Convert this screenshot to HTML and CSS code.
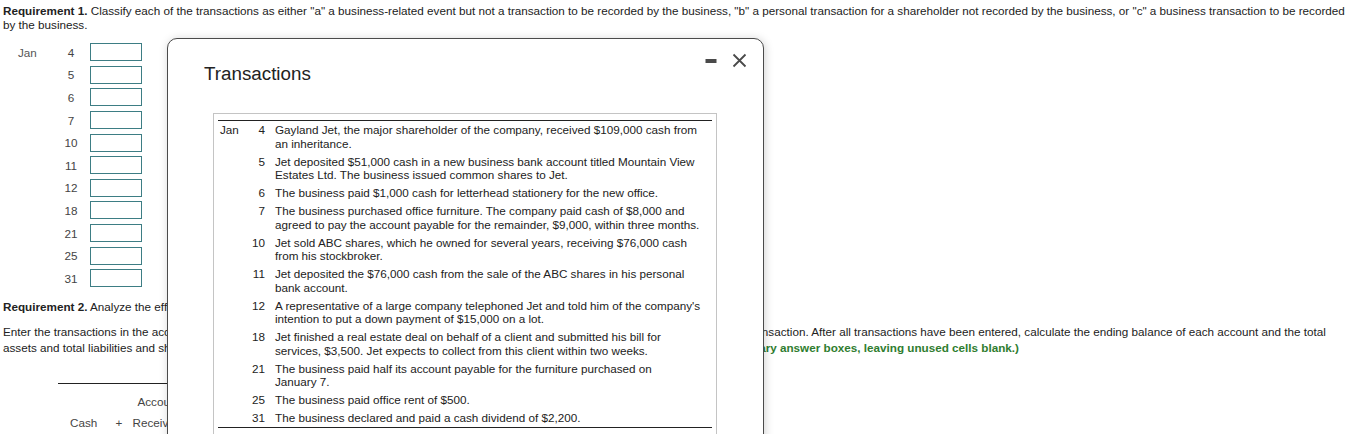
FILE: index.html
```html
<!DOCTYPE html>
<html lang="en">
<head>
<meta charset="utf-8">
<title>Transactions</title>
<link rel="stylesheet" href="styles.css">
</head>
<body>
<div class="page">
  <p class="req req1"><b>Requirement 1.</b> Classify each of the transactions as either "a" a business-related event but not a transaction to be recorded by the business, "b" a personal transaction for a shareholder not recorded by the business, or "c" a business transaction to be recorded by the business.</p>

  <div class="classify">
    <div class="month">Jan</div><div class="day">4</div><div class="answer"></div>
    <div class="month"></div><div class="day">5</div><div class="answer"></div>
    <div class="month"></div><div class="day">6</div><div class="answer"></div>
    <div class="month"></div><div class="day">7</div><div class="answer"></div>
    <div class="month"></div><div class="day">10</div><div class="answer"></div>
    <div class="month"></div><div class="day">11</div><div class="answer"></div>
    <div class="month"></div><div class="day">12</div><div class="answer"></div>
    <div class="month"></div><div class="day">18</div><div class="answer"></div>
    <div class="month"></div><div class="day">21</div><div class="answer"></div>
    <div class="month"></div><div class="day">25</div><div class="answer"></div>
    <div class="month"></div><div class="day">31</div><div class="answer"></div>
  </div>

  <p class="req req2"><b>Requirement 2.</b> Analyze the effects of the business transactions on the accounting equation of Mountain View Estates Ltd.</p>

  <p class="enter"><span class="line">Enter the transactions in the accounting equation of the business by entering the amounts of the transaction in every account on the line for that transaction. After all transactions have been entered, calculate the ending balance of each account and the total</span><span class="line">assets and total liabilities and shareholders' equity. <b class="hint">(Enter decreases to the accounts with a minus sign or parentheses. Complete all necessary answer boxes, leaving unused cells blank.)</b></span></p>

  <table class="equation">
    <tr class="eq-top">
      <td class="c-cash"></td><td class="c-op"></td><td class="c-ar">Accounts</td><td class="c-rest"></td>
    </tr>
    <tr class="eq-names">
      <td class="c-cash">Cash</td><td class="c-op">+</td><td class="c-ar">Receivable</td><td class="c-rest"></td>
    </tr>
  </table>
</div>

<div class="modal">
  <div class="modal-controls">
    <svg class="ic-min" width="12" height="12" viewBox="0 0 12 12"><rect x="0.5" y="4" width="11" height="4" fill="#4a4a4a"/></svg>
    <svg class="ic-close" width="15" height="15" viewBox="0 0 15 15"><path d="M1.5 1.5 L13.5 13.5 M13.5 1.5 L1.5 13.5" stroke="#4a4a4a" stroke-width="1.8" fill="none"/></svg>
  </div>
  <h2 class="modal-title">Transactions</h2>
  <div class="tx-box">
    <table class="tx">
      <tr><td class="tx-m">Jan</td><td class="tx-d">4</td><td class="tx-t">Gayland Jet, the major shareholder of the company, received $109,000 cash from an inheritance.</td></tr>
      <tr><td class="tx-m"></td><td class="tx-d">5</td><td class="tx-t">Jet deposited $51,000 cash in a new business bank account titled Mountain View Estates Ltd. The business issued common shares to Jet.</td></tr>
      <tr><td class="tx-m"></td><td class="tx-d">6</td><td class="tx-t">The business paid $1,000 cash for letterhead stationery for the new office.</td></tr>
      <tr><td class="tx-m"></td><td class="tx-d">7</td><td class="tx-t">The business purchased office furniture. The company paid cash of $8,000 and agreed to pay the account payable for the remainder, $9,000, within three months.</td></tr>
      <tr><td class="tx-m"></td><td class="tx-d">10</td><td class="tx-t">Jet sold ABC shares, which he owned for several years, receiving $76,000 cash from his stockbroker.</td></tr>
      <tr><td class="tx-m"></td><td class="tx-d">11</td><td class="tx-t">Jet deposited the $76,000 cash from the sale of the ABC shares in his personal bank account.</td></tr>
      <tr><td class="tx-m"></td><td class="tx-d">12</td><td class="tx-t">A representative of a large company telephoned Jet and told him of the company's intention to put a down payment of $15,000 on a lot.</td></tr>
      <tr><td class="tx-m"></td><td class="tx-d">18</td><td class="tx-t">Jet finished a real estate deal on behalf of a client and submitted his bill for services, $3,500. Jet expects to collect from this client within two weeks.</td></tr>
      <tr><td class="tx-m"></td><td class="tx-d">21</td><td class="tx-t">The business paid half its account payable for the furniture purchased on January&nbsp;7.</td></tr>
      <tr><td class="tx-m"></td><td class="tx-d">25</td><td class="tx-t">The business paid office rent of $500.</td></tr>
      <tr><td class="tx-m"></td><td class="tx-d">31</td><td class="tx-t">The business declared and paid a cash dividend of $2,200.</td></tr>
    </table>
  </div>
</div>
</body>
</html>
```

FILE: styles.css
```css
* { box-sizing: border-box; }

html, body {
  margin: 0;
  padding: 0;
  overflow: hidden;
}

body {
  position: relative;
  height: 434px;
  background: #fff;
  color: #222;
  font-family: "Liberation Sans", Arial, sans-serif;
  font-size: 11.7px;
}

.page {
  padding: 4px 3px 0 3px;
}

.req {
  margin: 0;
  line-height: 14px;
}

.req b { font-weight: bold; }

.classify {
  display: grid;
  grid-template-columns: 41px 24px 59px;
  grid-auto-rows: 22.6px;
  align-items: center;
  margin: 9px 0 0 15px;
  color: #444;
}

.month { color: #555; }

.day { text-align: center; }

.answer {
  width: 52px;
  height: 18px;
  margin-left: 7px;
  border: 1px solid #3d7d84;
  background: #fff;
}

.req2 { margin-top: 10px; }

.enter {
  margin: 10px 0 0 0;
  line-height: 16px;
}

.enter .line {
  display: block;
  white-space: nowrap;
}

.hint {
  color: #2f7d2f;
  font-weight: bold;
}

.equation {
  margin: 27px 0 0 55px;
  border-collapse: collapse;
  border-top: 1px solid #222;
  width: 640px;
  color: #444;
}

.equation td {
  padding: 0;
  line-height: 14px;
}

.eq-top td { padding-top: 11px; }
.eq-names td { padding-top: 7px; }

.c-cash { width: 50px; padding-left: 12px !important; }
.c-op { width: 22px; text-align: center; }
.c-ar { width: 63px; text-align: center; }

/* modal */
.modal {
  position: absolute;
  left: 167px;
  top: 38px;
  width: 597px;
  height: 430px;
  background: #fff;
  border: 1px solid #4a4a4a;
  border-radius: 10px;
  box-shadow: 1px 1px 10px rgba(0, 0, 0, 0.18);
  overflow: hidden;
}

.modal-controls {
  position: absolute;
  top: 14px;
  right: 16px;
  display: flex;
  align-items: center;
  gap: 15px;
}

.ic-min, .ic-close { display: block; }

.modal-title {
  margin: 0;
  padding: 24px 0 0 36px;
  font-size: 18.8px;
  line-height: 22px;
  font-weight: normal;
  color: #222;
}

.tx-box {
  width: 504px;
  height: 360px;
  margin: 28px 0 0 45px;
  padding: 6px 4px 0 4px;
  border: 1px solid #c4c4c4;
  border-bottom: none;
}

.tx {
  width: 100%;
  border-collapse: collapse;
  border-top: 1px solid #222;
  border-bottom: 1px solid #222;
}

.tx td {
  padding: 2.25px 0;
  line-height: 13.5px;
  vertical-align: top;
}

.tx-m { width: 27px; padding-left: 2px !important; }
.tx-d { width: 20px; text-align: right; }
.tx-t { padding-left: 10px !important; padding-right: 6px !important; }
```
